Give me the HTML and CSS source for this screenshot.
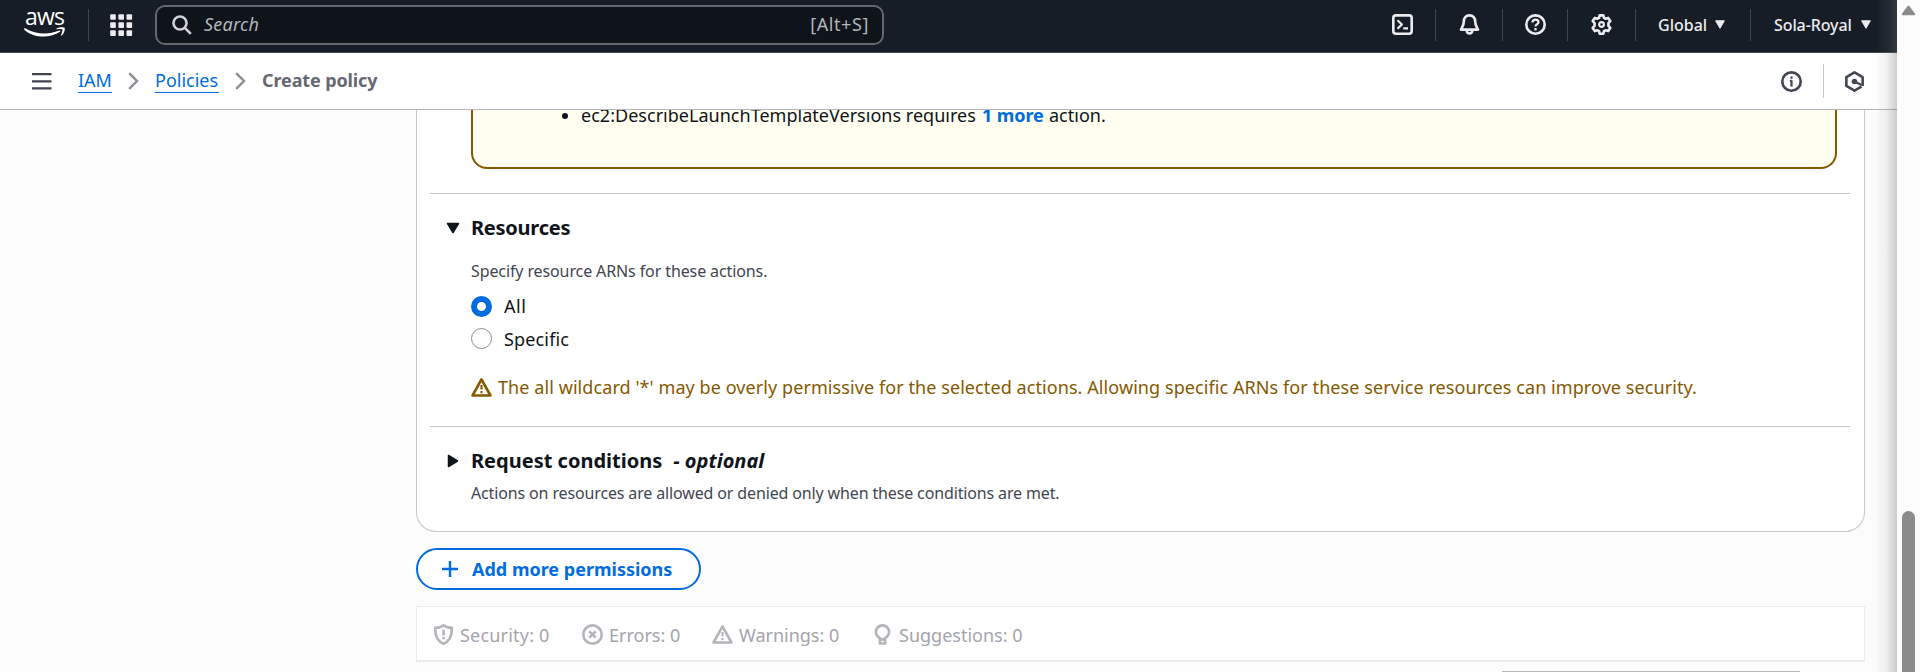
FILE: index.html
```html
<!DOCTYPE html>
<html lang="en">
<head>
<meta charset="utf-8">
<title>Create policy | IAM</title>
<link rel="stylesheet" href="styles.css">
</head>
<body>
<div class="app">
  <header class="topnav">
    <div class="logo">
      <span class="logo-text">aws</span>
      <svg class="logo-smile" width="43" height="11" viewBox="0 0 43 11"><path d="M1 1.6C1.3 1 2 1.100 2.600 1.500C13 7.600 25.500 7.800 36 3.600C37.300 3.100 38 4 37 4.800C27 11.800 10.500 11 1.500 2.900Z" fill="#fff"/><path d="M33.500 1.500C36.500-.3 40.800 0 41.600.8C42.300 2 41.300 6.300 38.600 8.600C38 9 37.700 8.700 38 8C39 5.600 39.800 3.200 39.200 2.500C38.600 1.800 36 1.900 34 2.200C33.300 2.200 33 1.900 33.500 1.500Z" fill="#fff"/></svg>
    </div>
    <span class="sep"></span>
    <svg class="grid-icon" width="23" height="23" viewBox="0 0 23 23" fill="#ebebf0"><rect x=".2" y=".2" width="5.600" height="5.600" rx="1"/><rect x="8.400" y=".2" width="5.600" height="5.600" rx="1"/><rect x="16.500" y=".2" width="5.600" height="5.600" rx="1"/><rect x=".2" y="8.300" width="5.600" height="5.600" rx="1"/><rect x="8.400" y="8.300" width="5.600" height="5.600" rx="1"/><rect x="16.500" y="8.300" width="5.600" height="5.600" rx="1"/><rect x=".2" y="16.300" width="5.600" height="5.600" rx="1"/><rect x="8.400" y="16.300" width="5.600" height="5.600" rx="1"/><rect x="16.500" y="16.300" width="5.600" height="5.600" rx="1"/></svg>
    <div class="search">
      <svg width="20" height="20" viewBox="0 0 20 20" fill="none" stroke="#d0d0d8" stroke-width="2.600"><circle cx="8" cy="8" r="6.500"/><path d="M12.600 12.600L18.800 18.800"/></svg>
      <span class="search-text">Search</span>
      <span class="search-key">[Alt+S]</span>
    </div>
    <div class="tools">
      <span class="tool t-shell"><svg class="icon" viewBox="0 0 16 16"><rect x="1" y="1" width="14" height="14" rx="2"/><path d="M4.200 4.700l3.300 3.300L4.200 11.300M8.600 11h3.600" stroke-width="1.700"/></svg></span>
      <span class="tool t-bell"><svg class="icon" viewBox="0 0 16 16"><path d="M8 1C5.200 1 3.700 3.200 3.700 5.500C3.700 8.500 2.500 10 1.500 11.900H14.500C13.500 10 12.300 8.500 12.300 5.500C12.300 3.200 10.800 1 8 1Z"/><path d="M5.800 12.500C6 14 7 14.900 8 14.900S10 14 10.200 12.500"/></svg></span>
      <span class="tool t-help"><svg class="icon" viewBox="0 0 16 16"><circle cx="8" cy="8" r="7"/><path d="M5.700 6.500C5.700 5 6.700 4.200 8 4.200S10.300 5 10.300 6.200C10.300 7.700 8 7.800 8 9.600M8 10.700V12.500" stroke-width="1.700"/></svg></span>
      <span class="tool t-gear"><svg class="icon" viewBox="0 0 16 16"><path d="M6.600 1h2.800l.5 1.900 1.200.7 2-.6 1.600 2.400-1.400 1.500v2.200l1.400 1.500-1.600 2.400-2-.6-1.200.7-.5 1.900H6.600l-.5-1.900-1.200-.7-2 .6-1.600-2.400 1.400-1.500V6.900L1.300 5.400 2.900 3l2 .6 1.200-.7z"/><circle cx="8" cy="8" r="1.800" stroke-width="1.700"/></svg></span>
      <span class="tool t-region"><span class="nav-text region">Global</span><svg class="caret" width="10" height="9" viewBox="0 0 10 9"><path d="M.6.8H9.400L5 8.300Z"/></svg></span>
      <span class="tool t-user"><span class="nav-text user">Sola-Royal</span><svg class="caret" width="10" height="9" viewBox="0 0 10 9"><path d="M.6.8H9.400L5 8.300Z"/></svg></span>
    </div>
  </header>

  <nav class="crumbs">
    <svg class="menu" width="20" height="17" viewBox="0 0 20 17"><path d="M0 1.200H19.500M0 8.300H19.500M0 15.400H19.500" stroke="#424650" stroke-width="2.300"/></svg>
    <a class="crumb c-iam">IAM</a>
    <svg class="chev" width="11" height="18" viewBox="0 0 11 18"><path d="M1.200 1.200L9 9L1.200 16.800"/></svg>
    <a class="crumb c-pol">Policies</a>
    <svg class="chev" width="11" height="18" viewBox="0 0 11 18"><path d="M1.200 1.200L9 9L1.200 16.800"/></svg>
    <span class="crumb-now">Create policy</span>
    <div class="crumb-tools">
      <svg class="icon dark" viewBox="0 0 16 16"><circle cx="8" cy="8" r="7"/><path d="M8 7v4.800M8 4.200v1.700M6.800 7.600H8" stroke-width="1.700"/></svg>
      <span class="crumb-sep"></span>
      <svg class="icon dark" viewBox="0 0 16 16"><path d="M14.200 11.400V4.600L8 1.100 1.800 4.600v6.800L8 14.900l5.300-3"/><circle cx="8" cy="8" r="2.100" fill="#424650" stroke="none"/><path d="M8 8l5.400 2.700" stroke-width="1.700"/></svg>
    </div>
  </nav>

  <main class="content">
    <section class="card">
      <div class="notice"><div class="notice-line"><i class="dot"></i><span class="n-a">ec2:DescribeLaunchTemplateVersions requires</span><b class="n-b">1 more</b><span class="n-c">action.</span></div></div>
      <div class="section resources">
        <div class="heading"><svg class="tri" width="14" height="14" viewBox="0 0 14 14"><path d="M1.500 2.500H12.500L7 11.500Z"/></svg><h3 class="h-res">Resources</h3></div>
        <p class="desc d-res">Specify resource ARNs for these actions.</p>
        <div class="radio-row"><i class="radio on"></i><span class="r-all">All</span></div>
        <div class="radio-row second"><i class="radio"></i><span class="r-spec">Specific</span></div>
        <div class="warning"><svg class="icon amber" viewBox="0 0 16 16"><path d="M8 1.800L1.200 14.100H14.800Z"/><path d="M8 6v3.600M8 10.700v1.700" stroke-width="1.600"/></svg><span class="w-text">The all wildcard '*' may be overly permissive for the selected actions. Allowing specific ARNs for these service resources can improve security.</span></div>
      </div>
      <div class="section conditions">
        <div class="heading"><svg class="tri" width="14" height="14" viewBox="0 0 14 14"><path d="M2.500 1.500V12.500L11.500 7Z"/></svg><h3 class="h-req">Request conditions</h3><em class="h-opt">- optional</em></div>
        <p class="desc d-req">Actions on resources are allowed or denied only when these conditions are met.</p>
      </div>
    </section>
    <button class="add"><svg width="18" height="18" viewBox="0 0 18 18"><path d="M9 1V17M1 9H17" stroke="#006ce0" stroke-width="2.400"/></svg><span class="add-text">Add more permissions</span></button>
    <div class="findings">
      <span class="finding f1"><svg class="icon grey" viewBox="0 0 16 16"><path d="M8 1C6 2.400 4 2.900 1.700 2.900C1.500 8.500 3 13 8 15C13 13 14.500 8.500 14.300 2.900C12 2.900 10 2.400 8 1Z"/><path d="M8 4.300V8.700M8 9.900v1.800"/></svg><span class="ft1">Security: 0</span></span>
      <span class="finding f2"><svg class="icon grey" viewBox="0 0 16 16"><circle cx="8" cy="8" r="7"/><path d="M5.600 5.600l4.800 4.800M10.400 5.600l-4.800 4.800"/></svg><span class="ft2">Errors: 0</span></span>
      <span class="finding f3"><svg class="icon grey" viewBox="0 0 16 16"><path d="M8 1.800L1.200 14.100H14.800Z"/><path d="M8 6v3.600M8 10.700v1.700" stroke-width="1.600"/></svg><span class="ft3">Warnings: 0</span></span>
      <span class="finding f4"><svg class="icon grey" viewBox="0 0 16 16"><path d="M6 10.700C4 9.500 3 8 3 6A5 5 0 0 1 13 6C13 8 12 9.500 10 10.700V14.900H6ZM6 11.700H10"/></svg><span class="ft4">Suggestions: 0</span></span>
    </div>
    <div class="next-card"></div>
  </main>
  <div class="edge-shadow"></div>
</div>
<aside class="scrollbar">
  <svg width="15" height="11" viewBox="0 0 15 11"><path d="M7.500 1.500L13.300 9.300H1.700Z" fill="#8b8b8b" stroke="#8b8b8b" stroke-width="2" stroke-linejoin="round"/></svg>
  <div class="thumb"></div>
</aside>
</body>
</html>
```
FILE: styles.css
```css
* { box-sizing: border-box; }
html, body { margin: 0; height: 672px; overflow: hidden; }
body {
  display: flex;
  background: #fcfcfc;
  color: #0f141a;
  font: 18px/22px "Noto Sans", "Open Sans", sans-serif;
  white-space: nowrap;
}
svg { display: block; flex: none; }
h3, p { margin: 0; }
.app { position: relative; width: 1897px; height: 672px; display: flex; flex-direction: column; overflow: hidden; }
.icon { width: 21px; height: 21px; fill: none; stroke: #ebebf0; stroke-width: 2; stroke-linejoin: round; }
.dark { stroke: #424650; }
.amber { stroke: #855900; }
.grey { stroke: #b4b4bb; }

/* top navigation */
.topnav { height: 53px; flex: none; display: flex; align-items: flex-start; background: #161d26; border-bottom: 1px solid #424650; padding-left: 23px; }
.logo { width: 43px; height: 40px; margin-top: 5px; display: flex; flex-direction: column; align-items: center; }
.logo-text { color: #fff; font: 500 23px/23px "Open Sans", sans-serif; letter-spacing: -0.8px; }
.logo-smile { margin-top: -1px; }
.sep { width: 1px; height: 32px; margin: 9px 0 0 22px; background: #424650; }
.grid-icon { margin: 14px 0 0 21px; }
.search { width: 729px; height: 40px; margin: 5px 0 0 22px; padding: 0 13px 0 15px; display: flex; align-items: center; border: 2px solid #656871; border-radius: 10px; background: #0f141a; color: #b4b4bb; }
.search-text { margin: 0 0 2px 12px; font-style: italic; letter-spacing: .25px; }
.search-key { margin: 0 0 2px auto; letter-spacing: .6px; }
.tools { display: flex; margin-left: auto; padding-right: 26px; }
.tool { height: 32px; margin-top: 9px; padding-bottom: 1px; display: flex; align-items: center; }
.tool + .tool { border-left: 1px solid #424650; }
.t-shell { width: 43px; }
.t-bell { width: 67px; justify-content: center; }
.t-help { width: 65px; justify-content: center; }
.t-gear { width: 68px; justify-content: center; }
.t-region { width: 115px; padding-left: 22px; }
.t-user { width: 121px; padding-left: 23px; }
.nav-text { color: #ebebf0; font-size: 16px; font-weight: 500; }
.region { width: 57px; }
.user { width: 87px; letter-spacing: -.1px; }
.caret { fill: #ebebf0; stroke: #ebebf0; stroke-linejoin: round; }

/* breadcrumbs */
.crumbs { height: 57px; flex: none; display: flex; align-items: center; background: #fff; border-bottom: 1px solid #b4b4bb; padding: 0 32px 0 32px; }
.crumb { height: 24px; line-height: 22px; color: #006ce0; border-bottom: 1px solid #006ce0; }
.menu { margin-right: 26px; }
.c-iam { width: 34px; letter-spacing: -.1px; }
.c-pol { width: 64px; }
.chev { margin: 0 16px 0 16px; fill: none; stroke: #8c8c94; stroke-width: 2.400; }
.crumb-now { padding-bottom: 2px; font-weight: 700; color: #656871; letter-spacing: -.12px; }
.crumb-tools { display: flex; align-items: center; margin-left: auto; }
.crumb-sep { width: 1px; height: 34px; margin: 0 20px 0 21px; background: #c6c6cd; }

/* policy statement card */
.content { flex: 1; min-height: 0; overflow: hidden; padding-left: 416px; background: #fcfcfc; }
.card { width: 1449px; height: 422px; padding: 0 14px 0 13px; background: #fff; border: 1px solid #c6c6cd; border-top: 0; border-radius: 0 0 20px 20px; }
.notice { height: 59px; margin: 0 13px 0 41px; overflow: hidden; background: #fffef0; border: 2px solid #855900; border-top: 0; border-radius: 0 0 16px 16px; }
.notice-line { display: flex; align-items: center; margin-top: -6px; padding-left: 89px; }
.dot { width: 6px; height: 6px; margin-right: 13px; border-radius: 50%; background: #0f141a; position: relative; top: 1px; }
.n-a { width: 401px; letter-spacing: .02px; }
.n-b { width: 67px; color: #006ce0; letter-spacing: -.1px; }
.section { border-top: 1px solid #c6c6cd; padding-top: 20px; }
.resources { margin-top: 24px; height: 233px; }
.heading { display: flex; align-items: center; padding-left: 16px; height: 28px; font-size: 20px; line-height: 28px; font-weight: 700; }
.heading h3 { font-size: 20px; margin-left: 11px; }
.h-res { letter-spacing: -.25px; }
.h-opt { margin-left: 11px; }
.tri { fill: #0f141a; stroke: #0f141a; stroke-width: 1.500; stroke-linejoin: round; }
.desc { padding-left: 41px; font-size: 16px; line-height: 20px; color: #424650; }
.d-res { margin-top: 19px; letter-spacing: -.11px; }
.d-req { margin-top: 8px; letter-spacing: -.14px; }
.radio-row { display: flex; align-items: center; gap: 12px; height: 21px; margin: 15px 0 0 41px; }
.radio-row.second { margin-top: 11px; }
.r-all { padding-bottom: 2px; letter-spacing: .5px; }
.r-spec { letter-spacing: .15px; }
.radio { width: 21px; height: 21px; border: 1.500px solid #8c8c94; border-radius: 50%; background: #fff; }
.radio.on { border: 6.500px solid #006ce0; }
.warning { display: flex; align-items: center; gap: 6px; height: 20px; margin: 28px 0 0 41px; color: #855900; }
.w-text { letter-spacing: .08px; }

/* actions and findings */
.add { display: flex; align-items: center; width: 285px; height: 42px; margin-top: 16px; padding: 0 0 0 23px; border: 2px solid #006ce0; border-radius: 21px; background: #fff; color: #006ce0; font: inherit; font-weight: 700; }
.add svg { margin-right: 13px; }
.findings { display: flex; align-items: center; width: 1449px; height: 56px; margin-top: 16px; padding: 1px 0 0 16px; background: #fff; border: 1px solid #ebebf0; border-bottom-width: 2px; color: #a4a4ad; }
.finding { display: flex; align-items: center; gap: 6px; }
.finding span { padding-top: 1px; }
.ft1 { letter-spacing: .2px; }
.f1 { width: 149px; }
.f2 { width: 130px; }
.f3 { width: 160px; }
.next-card { width: 298px; height: 1px; margin: 9px 0 0 1086px; background: #b4b4bb; }

.edge-shadow { position: absolute; top: 0; right: 0; width: 22px; height: 672px; background: linear-gradient(to right, rgba(120,120,120,0), rgba(120,120,120,.1) 50%, rgba(110,110,110,.34)); }
.scrollbar { width: 23px; height: 672px; padding: 5px 0 0 4px; background: #fcfcfc; }
.thumb { width: 13px; height: 161px; margin: 495px 0 0 1px; border-radius: 7px 7px 0 0; background: #8b8b8b; }
```
